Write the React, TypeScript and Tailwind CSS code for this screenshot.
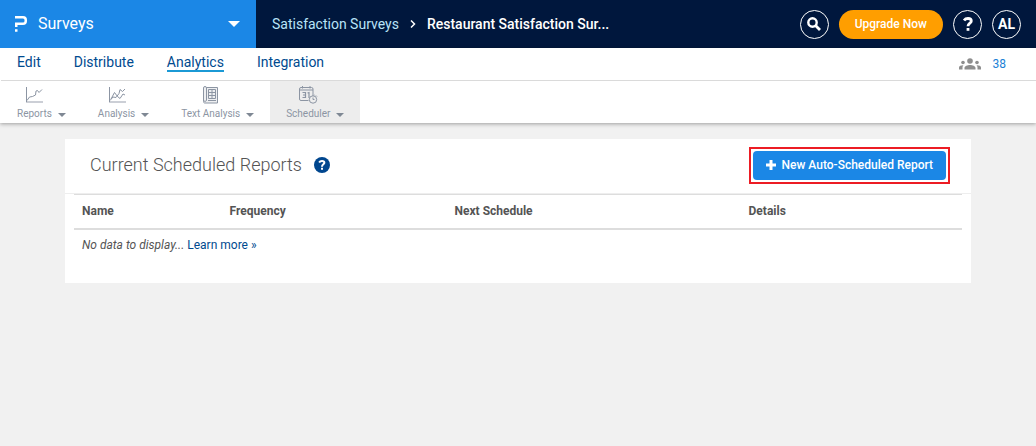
import type { ReactNode } from "react";

const NAV = ["Edit", "Distribute", "Analytics", "Integration"];
const COLUMNS = [
  { label: "Name", width: "w-1/6" },
  { label: "Frequency", width: "w-[25.4%]" },
  { label: "Next Schedule", width: "w-[33.2%]" },
  { label: "Details", width: "w-1/4" },
];

function Caret({ className }: { className: string }) {
  return (
    <svg viewBox="0 0 10 5" className={className} fill="currentColor" aria-hidden="true">
      <path d="M0 0h10L5 5z" />
    </svg>
  );
}

function Logo() {
  return (
    <svg viewBox="0 0 14 16" className="h-4 w-3.5" fill="none" stroke="currentColor" strokeWidth="2.5" aria-hidden="true">
      <path d="M1 1.250h8q2.750 0 2.750 2.750v1q0 2.750-2.750 2.750H2.250v3.250" />
      <path d="M1 14.500h2.500" />
    </svg>
  );
}

function ReportsIcon() {
  return (
    <svg viewBox="0 0 18 18" className="size-4.5" fill="none" stroke="currentColor" aria-hidden="true">
      <path d="M1.500 1v15" />
      <path d="M1 16H18" strokeWidth="1.500" opacity=".6" />
      <path d="M2 14.500l2.500-3.500 3-.500 3-1.500.500-4 1.500-.500 1.500 2L17 3.500" />
    </svg>
  );
}

function AnalysisIcon() {
  return (
    <svg viewBox="0 0 18 18" className="size-4.5" fill="none" stroke="currentColor" aria-hidden="true">
      <path d="M1.500 1v15" />
      <path d="M1 16H18" strokeWidth="1.500" opacity=".6" />
      <path d="M2 14.500l3-3.500 3 .500 3-4 1-4 2.500 2L17 3" />
      <path d="M3 13l3.500-6.500 3 4 2.500 2 3-4.500 2 1" />
    </svg>
  );
}

function TextIcon() {
  return (
    <svg viewBox="0 0 18 18" className="size-4.5" fill="none" stroke="currentColor" aria-hidden="true">
      <path d="M4.500 1.500h11v15.500h-13a1.500 1.500 0 0 1-1-1.500V2a1.500 1.500 0 0 1 3 0v12.500c0 1-3 1-3 0" fill="currentColor" fillOpacity=".15" />
      <path d="M6.500 3.500h7v9h-7zM10 3.500v9M6.500 6.500h7M6.500 9.500h7M6 14.500h8" />
    </svg>
  );
}

function SchedulerIcon() {
  return (
    <svg viewBox="0 0 20 18" className="h-4.5 w-5" fill="none" stroke="currentColor" aria-hidden="true">
      <path d="M10.500 14.500H3A1.500 1.500 0 0 1 1.500 13V3A1.500 1.500 0 0 1 3 1.500h10.500A1.500 1.500 0 0 1 15 3v5M1.500 4h13.500M4.500 0v2.500M12 0v2.500" />
      <path d="M4.500 6.500h3v5h-3M5 9h2.500M9.500 7l1.500-.500v5.500" strokeWidth="1.200" />
      <circle cx="15" cy="13.500" r="3.700" />
      <path d="M15 11.500v2h1.500M14 9h2.500M18 9.500l1 1" />
    </svg>
  );
}

function HelpMark({ className }: { className: string }) {
  return (
    <svg viewBox="0 0 10 14" className={className} fill="none" stroke="currentColor" strokeWidth="2.8" aria-hidden="true">
      <path d="M1 3.500C2 1.900 3.500 1.500 5 1.500c2 0 3.300.9 3.300 2.400C8.300 6.200 5 6 5 9.300" />
      <path d="M5 11v2.800" />
    </svg>
  );
}

const TOOLS: { label: string; icon: ReactNode; active?: boolean }[] = [
  { label: "Reports", icon: <ReportsIcon /> },
  { label: "Analysis", icon: <AnalysisIcon /> },
  { label: "Text Analysis", icon: <TextIcon /> },
  { label: "Scheduler", icon: <SchedulerIcon />, active: true },
];

export default function App() {
  return (
    <div className="min-h-screen bg-[#f1f1f1] font-['Roboto','Noto_Sans',sans-serif] text-[#545454]">
      <header className="flex h-12 items-center bg-[#00173d] text-white">
        <button className="flex h-full w-64 items-center bg-[#1b87e6] pr-4 pl-3.5">
          <Logo />
          <span className="ml-2.5 text-base">Surveys</span>
          <Caret className="ml-auto h-1.5 w-3" />
        </button>
        <nav className="ml-4 flex items-center text-sm" aria-label="Breadcrumb">
          <a href="#folder" className="text-[#b9e4f8]">Satisfaction Surveys</a>
          <svg viewBox="0 0 6 8" className="mx-2.75 h-2 w-1.5" fill="none" stroke="currentColor" strokeWidth="1.5" aria-hidden="true">
            <path d="M1 .5L4.500 4 1 7.500" />
          </svg>
          <span className="font-medium">Restaurant Satisfaction Sur...</span>
        </nav>
        <div className="mr-3.75 ml-auto flex items-center gap-2.5">
          <button aria-label="Search" className="flex size-7.25 items-center justify-center rounded-full border border-white">
            <svg viewBox="0 0 14 14" className="size-3.5" fill="none" stroke="currentColor" strokeWidth="2.4" aria-hidden="true">
              <circle cx="5.500" cy="5.500" r="4.200" />
              <path d="M8.500 8.500L13 13" strokeWidth="2.8" />
            </svg>
          </button>
          <button className="h-7.25 rounded-full bg-[#ff9e00] px-4 text-xs font-medium">Upgrade Now</button>
          <button aria-label="Help" className="flex size-7.25 items-center justify-center rounded-full border border-white">
            <HelpMark className="h-3.5 w-2.5" />
          </button>
          <button className="size-7.25 rounded-full border border-white text-sm font-bold">AL</button>
        </div>
      </header>

      <div className="bg-white shadow-[0_1px_4px_rgba(0,0,0,0.35)]">
        <div className="ml-px flex h-8.25 items-center border-b border-[#dadada] pr-7.5 pl-4">
          <nav className="flex gap-8.25 pb-0.5 text-sm text-[#004a8f]">
            {NAV.map((item) => (
              <a key={item} href={`#${item}`} className={item === "Analytics" ? "border-b-2 border-[#1b99d5] leading-4" : "leading-4"}>
                {item}
              </a>
            ))}
          </nav>
          <div className="ml-auto flex items-center gap-3 text-xs">
            <svg viewBox="0 0 22 12" className="h-3 w-5.5 text-[#8e8e8e]" fill="currentColor" aria-hidden="true">
              <circle cx="11" cy="3" r="2.800" />
              <circle cx="4" cy="4.500" r="1.800" />
              <circle cx="18" cy="4.500" r="1.800" />
              <path d="M5.500 11.500V10c0-2 3-3 5.500-3s5.500 1 5.500 3v1.500zM0 11.500V9.500c0-1.500 2-2.300 4.500-2.200-.8.700-1 1.500-1 2.500v1.700zM22 11.500V9.500c0-1.500-2-2.300-4.500-2.200.8.700 1 1.500 1 2.500v1.700z" />
            </svg>
            <a href="#responses" className="text-[#1b7fd6]">38</a>
          </div>
        </div>
        <div className="ml-px flex h-10.5">
          {TOOLS.map((tool) => (
            <button
              key={tool.label}
              className={`flex items-end gap-1.5 px-4 pb-0.75 text-[10px] leading-3 text-[#8c95a3] ${tool.active ? "bg-[#ededed]" : ""}`}
            >
              <span className="flex flex-col items-center gap-1">
                {tool.icon}
                {tool.label}
              </span>
              <Caret className="mb-0.75 h-1 w-2 text-[#7f8894]" />
            </button>
          ))}
        </div>
      </div>

      <main className="mx-16.25 mt-4 bg-white pb-5.5">
        <div className="flex h-13.75 items-center justify-between border-b border-[#eeeeee] pr-5.25 pb-0.5 pl-6.25">
          <h1 className="flex items-center gap-3 text-lg font-light">
            Current Scheduled Reports
            <button aria-label="About scheduled reports" className="flex size-4 items-center justify-center rounded-full bg-[#00468e] text-white">
              <HelpMark className="h-2.5 w-2" />
            </button>
          </h1>
          <div className="border-2 border-[#ec1c24] p-0.5">
            <button className="flex h-7.25 items-center gap-1.5 rounded-sm bg-[#1b87e6] px-3.25 text-xs font-medium text-white">
              <svg viewBox="0 0 10 10" className="size-2.5" stroke="currentColor" strokeWidth="3" aria-hidden="true">
                <path d="M5 0v10M0 5h10" />
              </svg>
              New Auto-Scheduled Report
            </button>
          </div>
        </div>
        <div className="px-2.25">
          <table className="w-full table-fixed text-left text-xs">
            <thead>
              <tr className="h-8.5 border-t border-b-2 border-[#dddddd]">
                {COLUMNS.map((col) => (
                  <th key={col.label} className={`px-2 font-bold ${col.width}`}>{col.label}</th>
                ))}
              </tr>
            </thead>
            <tbody>
              <tr className="h-8">
                <td colSpan={4} className="px-2">
                  <em>No data to display...</em> <a href="#learn" className="text-[#004a8f]">Learn more »</a>
                </td>
              </tr>
            </tbody>
          </table>
        </div>
      </main>
    </div>
  );
}
